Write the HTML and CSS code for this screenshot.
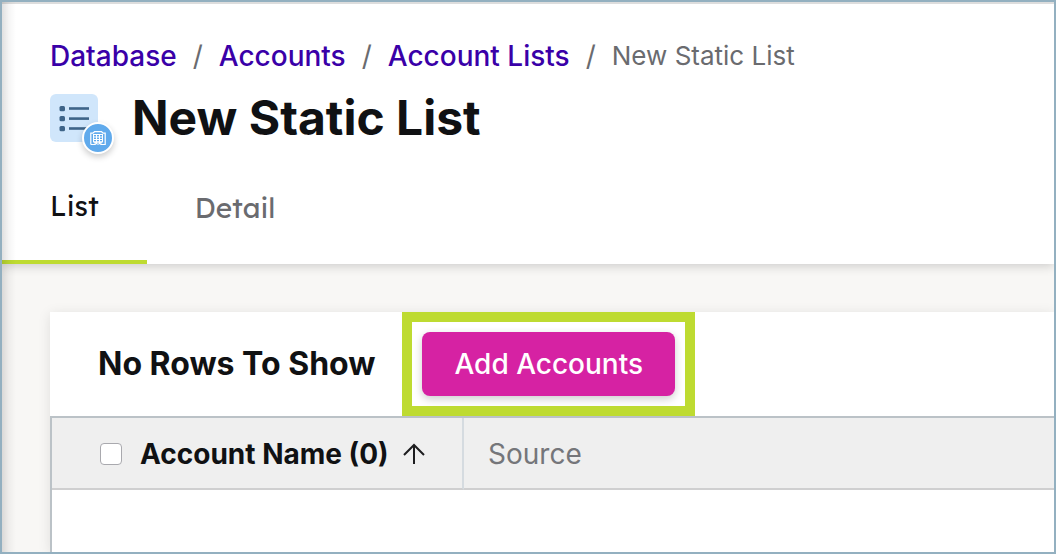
FILE: index.html
```html
<!DOCTYPE html>
<html lang="en">
<head>
    <meta charset="UTF-8">
    <meta name="viewport" content="width=device-width, initial-scale=1.0">
    <title>New Static List</title>
    <link rel="stylesheet" href="styles.css">
</head>
<body>
    <div class="page">
        <header class="page-header">
            <nav class="breadcrumbs" aria-label="Breadcrumb">
                <a href="#">Database</a>
                <span>/</span>
                <a href="#">Accounts</a>
                <span>/</span>
                <a href="#">Account Lists</a>
                <span>/</span>
                <span class="current">New Static List</span>
            </nav>

            <div class="title-row">
                <div class="list-icon">
                    <svg width="48" height="48" viewBox="0 0 48 48" aria-hidden="true">
                        <rect width="48" height="48" rx="6" fill="#d0e6fb"/>
                        <g fill="#3e6488">
                            <rect x="9.500" y="12" width="5.500" height="5.200" rx="1.500"/>
                            <rect x="9.500" y="22" width="5.500" height="5.200" rx="1.500"/>
                            <rect x="9.500" y="32" width="5.500" height="5.200" rx="1.500"/>
                            <rect x="19" y="13.200" width="20" height="2.600"/>
                            <rect x="19" y="23.300" width="20" height="2.600"/>
                            <rect x="19" y="33.200" width="20" height="2.600"/>
                        </g>
                    </svg>
                    <span class="list-badge">
                        <svg width="16" height="16" viewBox="0 0 16 16" fill="none" stroke="#fff" aria-hidden="true">
                            <path d="M.8 14.500V3.200h2L4.500 1.700h7l1.700 1.500h2v11.300h-4.400v-2.500M.8 14.500h4.400v-2.500" stroke-width="1.200"/>
                            <path d="M3 4.500h10M3.500 4.500v7.500h9V4.500M3.500 7h9M3.500 9.500h9M3.500 12h9M6.500 4.500v9.500M9.500 4.500v9.500M6.500 14h3" stroke-width="1"/>
                        </svg>
                    </span>
                </div>
                <h1>New Static List</h1>
            </div>

            <nav class="tabs">
                <a class="tab active" href="#">List</a>
                <a class="tab" href="#">Detail</a>
            </nav>
        </header>

        <main class="content">
            <section class="panel">
                <div class="toolbar">
                    <h2>No Rows To Show</h2>
                    <div class="highlight">
                        <button type="button" class="add-button">Add Accounts</button>
                    </div>
                </div>

                <div class="grid-wrap">
                    <table class="grid">
                        <thead>
                            <tr>
                                <th class="name-col">
                                    <div class="name-cell">
                                        <input type="checkbox" id="selectAll">
                                        <label for="selectAll">Account Name (0)</label>
                                        <svg width="22" height="22" viewBox="0 0 22 22" fill="none" stroke="#1d1d1f" stroke-width="2" aria-hidden="true">
                                            <path d="M11 21V2M1 12L11 2l10 10"/>
                                        </svg>
                                    </div>
                                </th>
                                <th class="source-col">Source</th>
                            </tr>
                        </thead>
                    </table>
                </div>
            </section>
        </main>
    </div>
</body>
</html>
```
FILE: styles.css
```css
* {
    box-sizing: border-box;
}

body {
    margin: 0;
    font-family: Inter, "Liberation Sans", sans-serif;
    font-size: 28px;
    line-height: 36px;
    color: #101113;
}

.page {
    position: relative;
    display: flex;
    flex-direction: column;
    min-height: 100vh;
    border: 2px solid #93b0c0;
    background-color: #f8f7f5;
}

/* soft shade along the left edge */
.page::before {
    content: "";
    position: absolute;
    top: 0;
    bottom: 0;
    left: 0;
    z-index: 2;
    width: 14px;
    background: linear-gradient(to right, rgba(0, 0, 0, 0.12), rgba(0, 0, 0, 0.04) 50%, rgba(0, 0, 0, 0));
    pointer-events: none;
}

.page-header {
    padding-top: 34px;
    border-top: 2px solid #dddddd;
    background-color: #ffffff;
    box-shadow: 0 2px 10px rgba(0, 0, 0, 0.18);
    clip-path: inset(0 0 -16px 0);
}

.breadcrumbs {
    display: flex;
    flex-wrap: wrap;
    gap: 16px;
    padding: 0 48px;
    color: #6a6b6f;
}

.breadcrumbs a {
    color: #3a00a8;
    font-weight: 500;
    text-decoration: none;
}

.breadcrumbs .current {
    font-size: 26px;
}

.title-row {
    display: flex;
    align-items: center;
    gap: 34px;
    padding: 14px 48px 0;
}

.list-icon {
    position: relative;
    width: 48px;
    height: 60px;
}

.list-icon svg {
    display: block;
}

.list-icon > svg {
    margin-top: 6px;
}

.list-badge {
    position: absolute;
    left: 32px;
    top: 34px;
    display: flex;
    align-items: center;
    justify-content: center;
    width: 32px;
    height: 32px;
    border: 2px solid #ffffff;
    border-radius: 50%;
    background-color: #60aaec;
    box-shadow: 0 3px 6px rgba(0, 0, 0, 0.2);
}

h1 {
    margin: 0;
    font-size: 48px;
    line-height: 60px;
    font-weight: 700;
}

.tabs {
    display: flex;
    height: 116px;
}

.tab {
    display: flex;
    align-items: center;
    padding: 4px 48px 0;
    color: #6a6b6f;
    font-family: Lexend, Inter, sans-serif;
    text-decoration: none;
}

.tab.active {
    border-bottom: 4px solid #bedb31;
    color: #101113;
}

.content {
    display: flex;
    flex: 1;
    padding: 48px 0 0 48px;
}

.panel {
    display: flex;
    flex: 1;
    flex-direction: column;
    background-color: #ffffff;
    box-shadow: 0 2px 12px rgba(0, 0, 0, 0.1);
    clip-path: inset(-12px 0 0 -12px);
}

.toolbar {
    display: flex;
    align-items: center;
    gap: 27px;
    padding-left: 48px;
}

h2 {
    margin: 0;
    font-size: 32px;
    line-height: 40px;
    font-weight: 700;
}

.highlight {
    padding: 10px;
    border: 10px solid #bedb31;
}

.add-button {
    display: block;
    height: 64px;
    padding: 0 32px;
    border: none;
    border-radius: 8px;
    background-color: #d622a3;
    box-shadow: 0 3px 8px rgba(0, 0, 0, 0.2);
    color: #ffffff;
    font-family: inherit;
    font-size: 28px;
    font-weight: 500;
    cursor: pointer;
}

.grid-wrap {
    flex: 1;
    border-top: 2px solid #bbc2c7;
    border-left: 2px solid #bbc2c7;
}

.grid {
    width: 100%;
    border-spacing: 0;
    table-layout: fixed;
}

.grid th {
    height: 72px;
    padding: 2px 24px 0;
    border-bottom: 2px solid #cfcfd0;
    background-color: #efefef;
    text-align: left;
}

.grid .name-col {
    width: 412px;
    padding-left: 48px;
    border-right: 2px solid #d5dbe0;
}

.grid .source-col {
    color: #75767a;
    font-weight: 400;
}

.name-cell {
    display: flex;
    align-items: center;
}

.name-cell input {
    appearance: none;
    width: 22px;
    height: 22px;
    margin: 0 18px 0 0;
    border: 1px solid #a9a9ae;
    border-radius: 4px;
    background-color: #ffffff;
}

.name-cell input:checked {
    background-color: #3a00a8;
}

.name-cell label {
    margin-right: 14px;
}
```
